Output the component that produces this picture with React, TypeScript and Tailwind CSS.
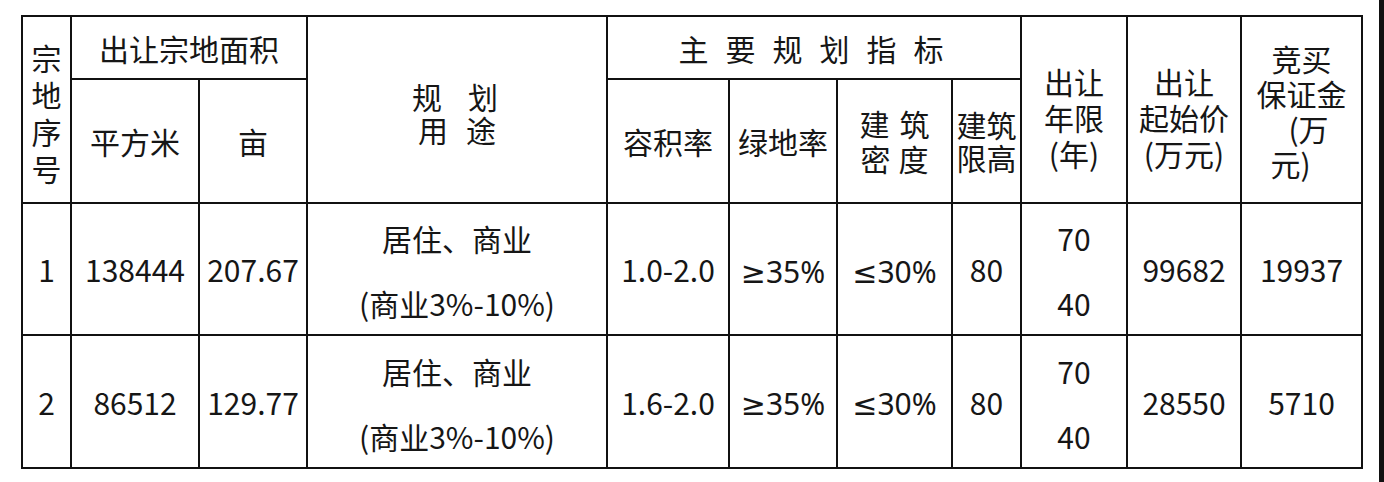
import React from 'react';

const font = { fontFamily: '"Noto Sans CJK SC", "Noto Sans", sans-serif' };
const symFont = { fontFamily: '"Noto Sans", "DejaVu Sans", sans-serif' };

const Cell = ({ className = '', children }: { className?: string; children?: React.ReactNode }) => (
  <div className={`bg-white flex flex-col items-center justify-center text-center text-[#161616] ${className}`}>
    {children}
  </div>
);

const rows = [
  { no: '1', sqm: '138444', mu: '207.67', far: '1.0-2.0', price: '99682', deposit: '19937' },
  { no: '2', sqm: '86512', mu: '129.77', far: '1.6-2.0', price: '28550', deposit: '5710' },
];

export default function App() {
  return (
    <div className="w-[1384px] h-[482px] bg-white flex text-[30px] leading-none" style={font}>
      <div className="flex-1 pl-[21px] pt-[15px]">
        <div className="grid w-[1342px] bg-[#111] p-[2px] gap-[2px] grid-cols-[47px_126px_106px_298px_120px_106px_113px_67px_104px_112px_119px] grid-rows-[61px_122px_130px_131px]">
          {/* header row 1 */}
          <Cell className="row-span-2 leading-[37px] pt-[6px]">
            <span>宗</span>
            <span>地</span>
            <span>序</span>
            <span>号</span>
          </Cell>
          <Cell className="col-span-2">出让宗地面积</Cell>
          <Cell className="row-span-2 leading-[33px] pt-[6px]">
            <div className="flex gap-[26px] -ml-[4px]">
              <span>规</span>
              <span>划</span>
            </div>
            <div className="flex gap-[18px]">
              <span>用</span>
              <span>途</span>
            </div>
          </Cell>
          <Cell className="col-span-4">
            <div className="flex gap-[17px] -ml-[6px]">
              {'主要规划指标'.split('').map((c) => (
                <span key={c}>{c}</span>
              ))}
            </div>
          </Cell>
          <Cell className="row-span-2 leading-[36px] pt-[14px]">
            <span>出让</span>
            <span>年限</span>
            <span>(年)</span>
          </Cell>
          <Cell className="row-span-2 leading-[36px] pt-[14px]">
            <span>出让</span>
            <span>起始价</span>
            <span>(万元)</span>
          </Cell>
          <Cell className="row-span-2 leading-[35px] pt-[2px]">
            <span>竞买</span>
            <span>保证金</span>
            <span className="pl-[14px]">(万</span>
            <span className="pr-[22px]">元)</span>
          </Cell>

          {/* header row 2 */}
          <Cell>平方米</Cell>
          <Cell>亩</Cell>
          <Cell>容积率</Cell>
          <Cell>绿地率</Cell>
          <Cell className="leading-[35px]">
            <div className="flex gap-[10px]">
              <span>建</span>
              <span>筑</span>
            </div>
            <div className="flex gap-[8px]">
              <span>密</span>
              <span>度</span>
            </div>
          </Cell>
          <Cell className="leading-[33px]">
            <span>建筑</span>
            <span>限高</span>
          </Cell>

          {/* data rows */}
          {rows.map((r) => (
            <React.Fragment key={r.no}>
              <Cell>{r.no}</Cell>
              <Cell>{r.sqm}</Cell>
              <Cell>{r.mu}</Cell>
              <Cell className="leading-[65px] pt-[4px]">
                <span>居住、商业</span>
                <span>(商业3%-10%)</span>
              </Cell>
              <Cell>{r.far}</Cell>
              <Cell>
                <span className="pt-[5px]" style={symFont}>≥35%</span>
              </Cell>
              <Cell>
                <span className="pt-[5px]" style={symFont}>≤30%</span>
              </Cell>
              <Cell>80</Cell>
              <Cell className="leading-[65px] pt-[4px]">
                <span>70</span>
                <span>40</span>
              </Cell>
              <Cell>{r.price}</Cell>
              <Cell>{r.deposit}</Cell>
            </React.Fragment>
          ))}
        </div>
      </div>
      <div className="w-[5px] h-full bg-[#111]" />
    </div>
  );
}
